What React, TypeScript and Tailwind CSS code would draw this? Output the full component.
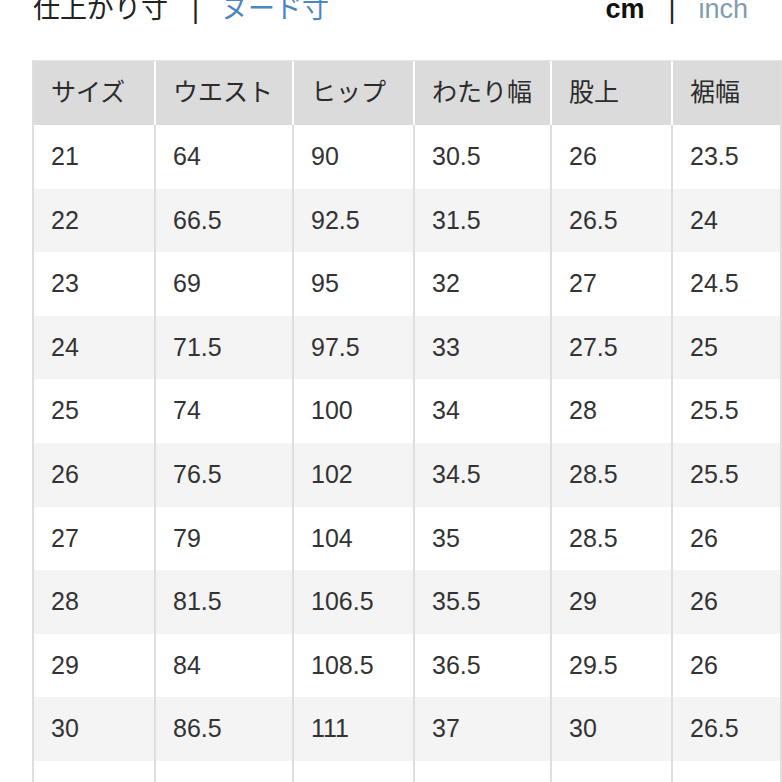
import React from "react";

const HEAD = ["サイズ", "ウエスト", "ヒップ", "わたり幅", "股上", "裾幅"];

const ROWS = [
  ["21", "64", "90", "30.5", "26", "23.5"],
  ["22", "66.5", "92.5", "31.5", "26.5", "24"],
  ["23", "69", "95", "32", "27", "24.5"],
  ["24", "71.5", "97.5", "33", "27.5", "25"],
  ["25", "74", "100", "34", "28", "25.5"],
  ["26", "76.5", "102", "34.5", "28.5", "25.5"],
  ["27", "79", "104", "35", "28.5", "26"],
  ["28", "81.5", "106.5", "35.5", "29", "26"],
  ["29", "84", "108.5", "36.5", "29.5", "26"],
  ["30", "86.5", "111", "37", "30", "26.5"],
  ["31", "89", "113.5", "38", "30.5", "27"],
];

const COLS = "grid grid-cols-[122px_138px_121px_137px_121px_108px]";

export default function App() {
  return (
    <div
      className="h-[782px] w-[782px] overflow-hidden bg-white text-[#333]"
      style={{ fontFamily: '"Liberation Sans", "Noto Sans CJK JP", sans-serif' }}
    >
      {/* unit switches */}
      <div className="-mt-[8px] flex h-[34px] items-center pl-[33px] pr-[34px] text-[27px] leading-none">
        <span className="text-[#222]">仕上がり寸</span>
        <span className="ml-[24px] text-[#222]">|</span>
        <span className="ml-[22px] text-[#4a86c0]">ヌード寸</span>
        <div className="flex-1" />
        <span className="font-bold text-[#111]">cm</span>
        <span className="ml-[24px] text-[#222]">|</span>
        <span className="ml-[23px] text-[#7f9cb0]">inch</span>
      </div>

      <div className="ml-[32px] mt-[34px] w-[750px] border-l-2 border-r-2 border-[#dedede]">
        <div className={`${COLS} h-[65px] border-t border-[#e6e6e6] bg-[#dbdbdb]`}>
          {HEAD.map((h, i) => (
            <div
              key={h}
              className={`flex items-center pl-[17px] text-[25px] text-[#2b2b2b] ${
                i < HEAD.length - 1 ? "border-r-2 border-white" : ""
              }`}
            >
              {h}
            </div>
          ))}
        </div>
        {ROWS.map((row, r) => (
          <div
            key={r}
            className={`${COLS} h-[63.6px] ${r % 2 === 1 ? "bg-[#f4f4f4]" : "bg-white"}`}
          >
            {row.map((v, i) => (
              <div
                key={i}
                className={`flex items-center pl-[17px] text-[25px] ${
                  i < row.length - 1 ? "border-r-2 border-[#dedede]" : ""
                }`}
              >
                {v}
              </div>
            ))}
          </div>
        ))}
      </div>
    </div>
  );
}
